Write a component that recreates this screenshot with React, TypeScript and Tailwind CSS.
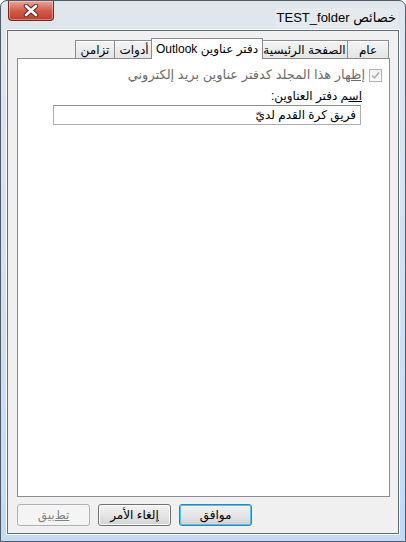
const font = "font-['Liberation_Sans','DejaVu_Sans',sans-serif]"

function CloseButton() {
  return (
    <div className="ml-[1px] w-[46px] h-[20px] rounded-b-[4px] border border-t-0 border-[#6b2a22] bg-gradient-to-b from-[#eaa596] via-[#d35d4a] to-[#c23b2c] flex items-center justify-center shadow-[inset_0_0_0_1px_rgba(255,255,255,0.35)]">
      <svg width="16" height="13" viewBox="0 0 16 13">
        <path d="M3 2 L13 11 M13 2 L3 11" stroke="#5a2a24" strokeWidth="4.5" strokeLinecap="round" />
        <path d="M3 2 L13 11 M13 2 L3 11" stroke="#ffffff" strokeWidth="2.6" strokeLinecap="round" />
      </svg>
    </div>
  )
}

function Tab({ label, width, selected }: { label: string; width: string; selected?: boolean }) {
  if (selected) {
    return (
      <div
        className={`${width} relative z-10 -mx-[2px] -mb-px h-[21px] bg-white border border-b-0 border-[#898c95] flex items-center justify-center text-[12px] text-black pb-[1px]`}
      >
        {label}
      </div>
    )
  }
  return (
    <div
      className={`${width} -ms-px first:ms-0 h-[18px] border border-b-0 border-[#898c95] bg-gradient-to-b from-[#f5f5f5] to-[#e4e4e4] shadow-[inset_0_1px_0_#ffffff] flex items-center justify-center text-[12px] text-black`}
    >
      {label}
    </div>
  )
}

function Button({
  children,
  isDefault,
  disabled,
}: {
  children: React.ReactNode
  isDefault?: boolean
  disabled?: boolean
}) {
  if (disabled) {
    return (
      <div className="w-[73px] h-[22px] rounded-[3px] border border-[#adb2b5] bg-[#f4f4f4] flex items-center justify-center text-[12px] text-[#838383]">
        {children}
      </div>
    )
  }
  return (
    <div
      className={`w-[73px] h-[22px] rounded-[3px] border ${
        isDefault
          ? 'border-[#3c7fb1] shadow-[inset_0_0_0_1px_#48c6f5]'
          : 'border-[#707070] shadow-[inset_0_0_0_1px_#fcfcfc]'
      } bg-gradient-to-b from-[#f2f2f2] via-[#e6e6e6] to-[#d2d2d2] flex items-center justify-center text-[12px] text-black`}
    >
      {children}
    </div>
  )
}

export default function App() {
  return (
    <div
      className={`${font} w-[406px] h-[542px] rounded-t-[7px] border border-[#4f5b68] bg-gradient-to-b from-[#e1e6ec] via-[#d2e1f2] to-[#c3daf5] flex flex-col px-[6px] pb-[7px]`}
    >
      {/* Title bar */}
      <div className="h-[29px] flex items-start justify-between shrink-0">
        <CloseButton />
        <div className="mt-[7px] mr-[1px] px-[2px] text-[13px] text-black bg-[#e6ebf0]/70 rounded-[3px]" dir="rtl">
          خصائص TEST_folder
        </div>
      </div>

      {/* Client area */}
      <div
        dir="rtl"
        className="flex-1 flex flex-col border border-[#5f6c79] bg-[#f0f0f0] shadow-[0_0_0_1px_#ffffff] pt-[7px] pr-[8px] pl-[9px]"
      >
        {/* Tabs */}
        <div className="flex items-end pr-[1px] h-[20px]">
          <Tab label="عام" width="w-[42px]" />
          <Tab label="الصفحة الرئيسية" width="w-[87px]" />
          <Tab label="دفتر عناوين Outlook" width="w-[112px]" selected />
          <Tab label="أدوات" width="w-[40px]" />
          <Tab label="تزامن" width="w-[40px]" />
        </div>

        {/* Panel */}
        <div className="h-[439px] bg-white border border-[#898c95] pt-[9px] pr-[7px] text-[12px]">
          <div className="flex items-center gap-[4px] h-[14px]">
            <div className="w-[13px] h-[13px] border border-[#b1b1b1] bg-gradient-to-b from-[#f2f2f2] to-[#fbfbfb] flex items-center justify-center">
              <svg width="9" height="9" viewBox="0 0 9 9">
                <path d="M1 4.5 L3.5 7 L8 1.5" fill="none" stroke="#a8a8a8" strokeWidth="1.4" />
              </svg>
            </div>
            <span className="text-[#6d6d6d] text-[13px]">
              <span className="underline">إظ</span>هار هذا المجلد كدفتر عناوين بريد إلكتروني
            </span>
          </div>

          <div className="mt-[7px] pr-[20px] text-black h-[14px] leading-[14px]">
            <span className="underline">اس</span>م دفتر العناوين:
          </div>

          <div className="mt-[2px] mr-[21px] ml-[35px] h-[20px] border border-[#abadb3] border-t-[#8e8f8f] bg-white flex items-center pr-[4px] text-black">
            فريق كرة القدم لديّ
          </div>
        </div>

        {/* Buttons */}
        <div className="mt-[7px] flex justify-end gap-[8px]">
          <Button isDefault>موافق</Button>
          <Button>
            <span className="underline">إ</span>لغاء الأمر
          </Button>
          <Button disabled>
            <span className="underline">تط</span>بيق
          </Button>
        </div>
      </div>
    </div>
  )
}
